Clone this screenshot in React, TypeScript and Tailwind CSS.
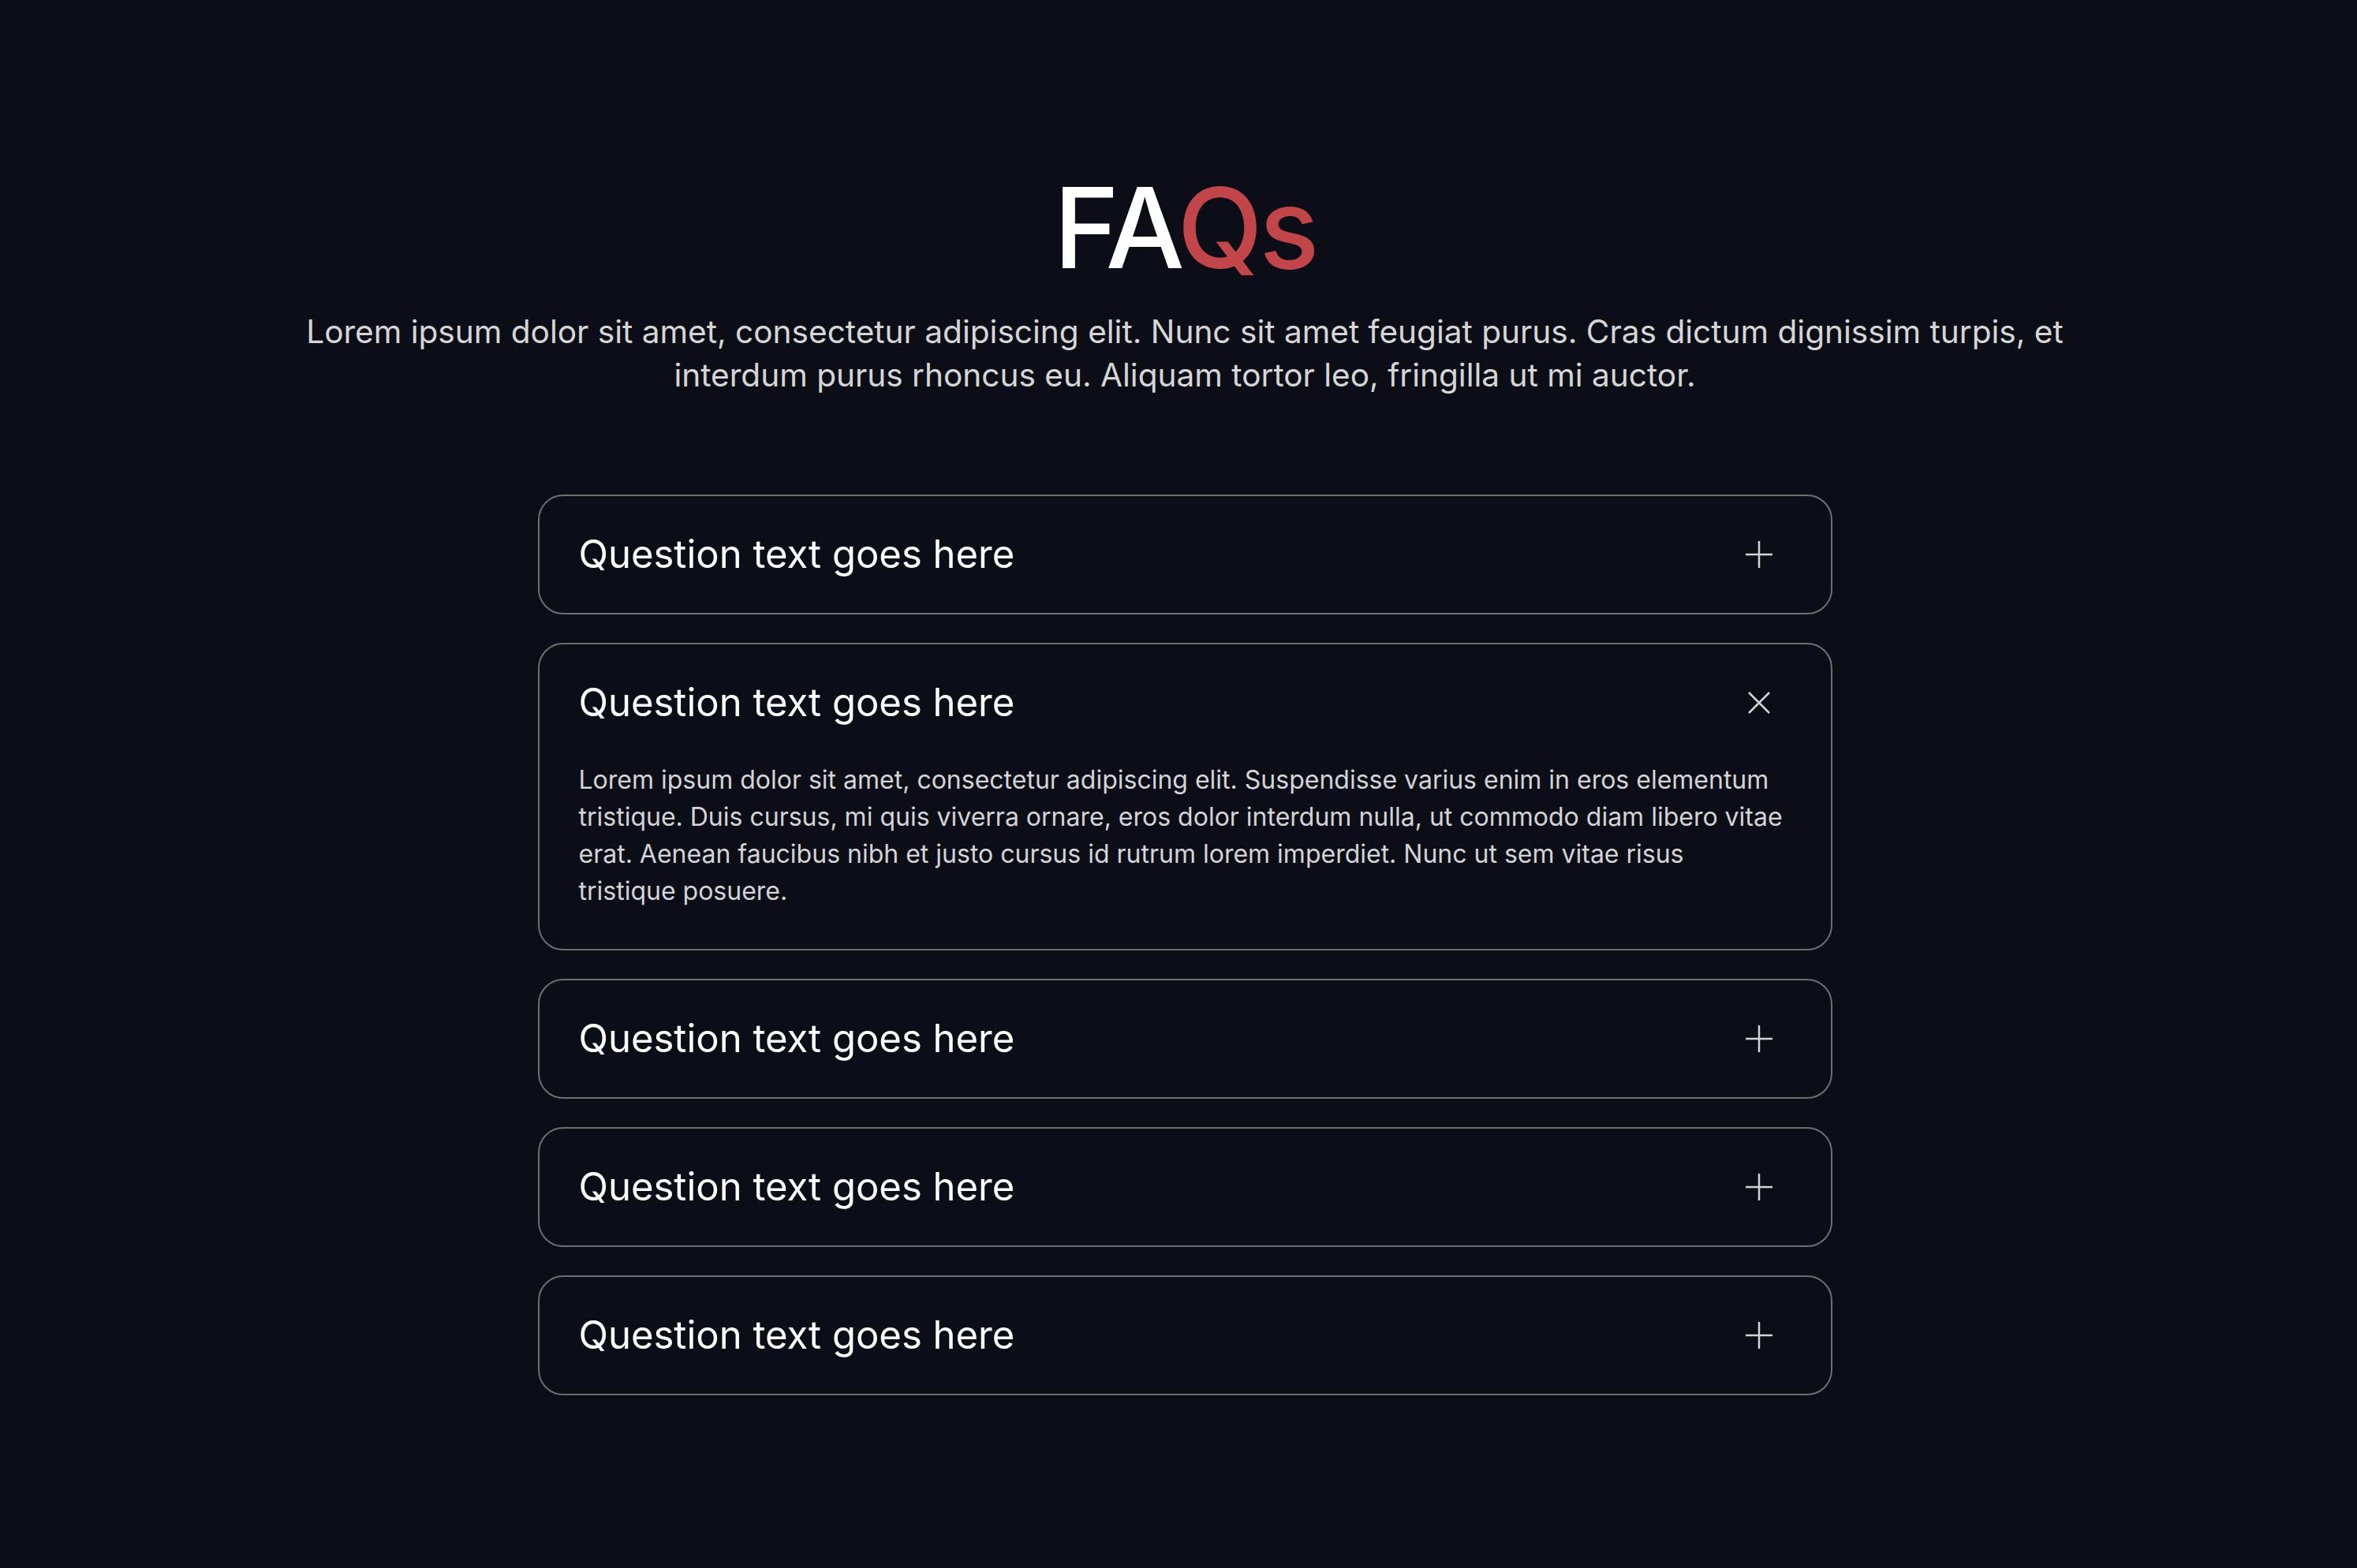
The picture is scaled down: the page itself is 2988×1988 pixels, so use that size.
const faqs = [
  { q: "Question text goes here", open: false },
  {
    q: "Question text goes here",
    open: true,
    a: "Lorem ipsum dolor sit amet, consectetur adipiscing elit. Suspendisse varius enim in eros elementum tristique. Duis cursus, mi quis viverra ornare, eros dolor interdum nulla, ut commodo diam libero vitae erat. Aenean faucibus nibh et justo cursus id rutrum lorem imperdiet. Nunc ut sem vitae risus tristique posuere.",
  },
  { q: "Question text goes here", open: false },
  { q: "Question text goes here", open: false },
  { q: "Question text goes here", open: false },
];

const PlusIcon = () => (
  <svg width="36" height="36" viewBox="0 0 36 36" fill="none">
    <path d="M18 1v34M1 18h34" stroke="#d4d4d6" strokeWidth="2.5" />
  </svg>
);

const CloseIcon = () => (
  <svg width="36" height="36" viewBox="0 0 36 36" fill="none">
    <path d="M5 5l26 26M31 5L5 31" stroke="#d4d4d6" strokeWidth="2.5" />
  </svg>
);

export default function App() {
  return (
    <div
      className="min-h-screen w-full bg-[#0b0e16] flex flex-col items-center pl-[16px] pt-[218px] pb-[200px]"
      style={{ fontFamily: "Inter, 'Noto Sans', sans-serif" }}
    >
      <h1 className="text-[141px] leading-none font-medium tracking-[-0.03em] text-white">
        FA<span className="text-[#c2454a]">Qs</span>
      </h1>
      <p className="mt-[34px] w-[2280px] text-center text-[40.6px] leading-[55px] text-[#d6d6d8]">
        Lorem ipsum dolor sit amet, consectetur adipiscing elit. Nunc sit amet
        feugiat purus. Cras dictum dignissim turpis, et interdum purus rhoncus
        eu. Aliquam tortor leo, fringilla ut mi auctor.
      </p>
      <div className="mt-[124px] w-[1641px] flex flex-col gap-[36px]">
        {faqs.map((f, i) => (
          <div
            key={i}
            className="border-2 border-[#6b6e73] rounded-[32px] bg-[#0b0e16]"
          >
            <div className="h-[148px] flex items-center justify-between pl-[50px] pr-[73px]">
              <span className="text-[49px] text-white">{f.q}</span>
              {f.open ? <CloseIcon /> : <PlusIcon />}
            </div>
            {f.open && (
              <p className="pl-[50px] pr-[59px] pb-[50px] text-[32px] leading-[47px] text-[#d4d4d8]">
                {f.a}
              </p>
            )}
          </div>
        ))}
      </div>
    </div>
  );
}
